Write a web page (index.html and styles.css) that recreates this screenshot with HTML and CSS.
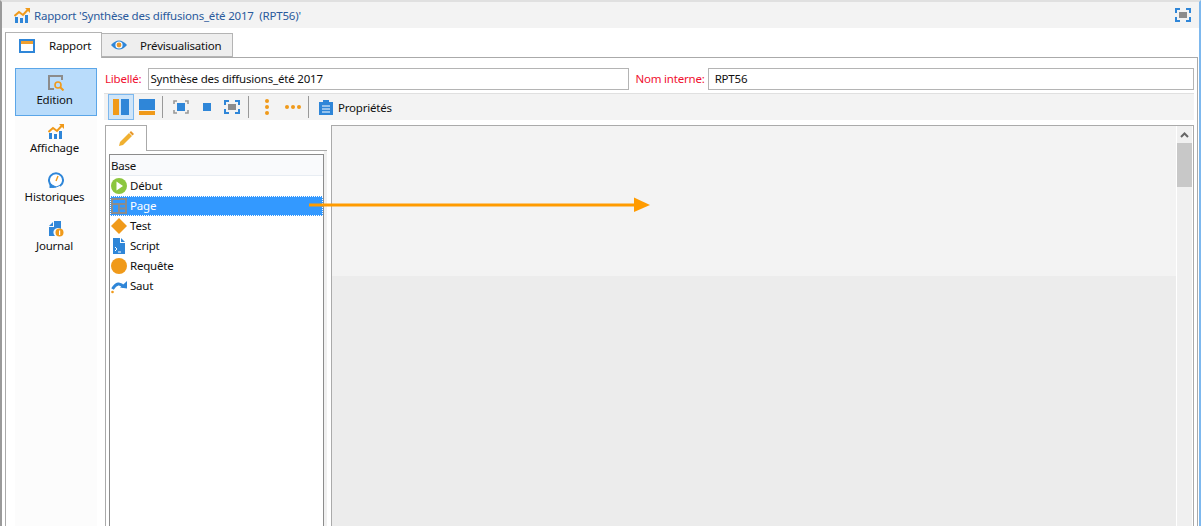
FILE: index.html
```html
<!DOCTYPE html>
<html lang="fr">
<head>
    <meta charset="UTF-8">
    <meta name="viewport" content="width=device-width, initial-scale=1.0">
    <title>Rapport</title>
    <link rel="stylesheet" href="styles.css">
</head>
<body>

<svg class="defs" width="0" height="0">
    <symbol id="chart" viewBox="0 0 16 16">
        <rect x="1" y="10" width="3" height="6" fill="#2f86d8"/>
        <rect x="6" y="11" width="3" height="5" fill="#2f86d8"/>
        <rect x="11" y="8" width="3" height="8" fill="#2f86d8"/>
        <path d="M0.5 9 L5 5 L9 8 L14 2.5" fill="none" stroke="#f09a1a" stroke-width="2"/>
        <path d="M11 1 H16 V6 Z" fill="#f09a1a"/>
    </symbol>
    <symbol id="fit" viewBox="0 0 16 16">
        <path d="M1 6 V2 H5 M11 2 H15 V6 M15 10 V14 H11 M5 14 H1 V10" fill="none" stroke="#2f86d8" stroke-width="2"/>
        <rect x="4" y="5" width="8" height="6" fill="#8c8c8c"/>
    </symbol>
</svg>

<div class="window">
    <header class="titlebar">
        <svg class="ico-16" width="16" height="16"><use href="#chart"/></svg>
        <span class="title-text">Rapport 'Synthèse des diffusions_été 2017&nbsp; (RPT56)'</span>
        <svg class="title-fit" width="16" height="16"><use href="#fit"/></svg>
    </header>

    <nav class="tabs">
        <a class="tab tab-active">
            <svg width="16" height="14" viewBox="0 0 16 14">
                <rect x="1" y="1" width="14" height="12" fill="#fff" stroke="#2f86d8" stroke-width="2"/>
                <rect x="2" y="2" width="12" height="3" fill="#f0a030"/>
            </svg>
            Rapport
        </a>
        <a class="tab">
            <svg width="16" height="12" viewBox="0 0 16 12">
                <path d="M0 6 Q8 -3 16 6 Q8 15 0 6 Z" fill="#2f86d8"/>
                <circle cx="8" cy="6" r="3.6" fill="#fff"/>
                <circle cx="8" cy="6" r="2.4" fill="#e8972a"/>
            </svg>
            Prévisualisation
        </a>
    </nav>

    <div class="panel">
        <aside class="sidebar">
            <div class="side-item side-selected">
                <svg width="16" height="16" viewBox="0 0 16 16">
                    <path d="M14 5 V1 H1 V14 H6" fill="none" stroke="#8c8c8c" stroke-width="2"/>
                    <circle cx="10" cy="10" r="3" fill="none" stroke="#f09a1a" stroke-width="1.6"/>
                    <path d="M12 12 L15.5 15.5" stroke="#f09a1a" stroke-width="2"/>
                </svg>
                <span>Edition</span>
            </div>
            <div class="side-item">
                <svg width="16" height="16"><use href="#chart"/></svg>
                <span>Affichage</span>
            </div>
            <div class="side-item">
                <svg width="16" height="16" viewBox="0 0 16 16">
                    <path d="M4 14 A7 7 0 1 1 12 14" fill="#fff" stroke="#2f86d8" stroke-width="2"/>
                    <path d="M2 12 L8 15 L2 16 Z M8 15 L13 13" fill="#2f86d8" stroke="#2f86d8"/>
                    <path d="M8 9 L10 4" stroke="#f09a1a" stroke-width="1.4"/>
                </svg>
                <span>Historiques</span>
            </div>
            <div class="side-item">
                <svg width="16" height="16" viewBox="0 0 16 16">
                    <path d="M1 5 L5 1 V5 Z M1 6 H6 V0 H13 V8 A4.5 4.5 0 0 0 7 15 H1 Z" fill="#2f86d8"/>
                    <circle cx="11.5" cy="11.5" r="4" fill="#f09a1a"/>
                    <rect x="11" y="9.5" width="1.2" height="4.5" fill="#fff"/>
                </svg>
                <span>Journal</span>
            </div>
        </aside>

        <main class="main">
            <div class="fields">
                <label class="field-label">Libellé:</label>
                <input class="field field-name" value="Synthèse des diffusions_été 2017">
                <label class="field-label">Nom interne:</label>
                <input class="field field-id" value="RPT56">
            </div>

            <div class="toolbar">
                <button class="tool tool-on">
                    <svg width="16" height="16" viewBox="0 0 16 16">
                        <rect x="0" y="0" width="6" height="16" fill="#f09a1a"/>
                        <rect x="8" y="0" width="8" height="16" fill="#2f86d8"/>
                    </svg>
                </button>
                <button class="tool">
                    <svg width="16" height="16" viewBox="0 0 16 16">
                        <rect x="0" y="0" width="16" height="11" fill="#2f86d8"/>
                        <rect x="0" y="12" width="16" height="4" fill="#f09a1a"/>
                    </svg>
                </button>
                <i class="tool-sep"></i>
                <button class="tool">
                    <svg width="16" height="16" viewBox="0 0 16 16">
                        <path d="M1 5 V2 H4 M12 2 H15 V5 M15 11 V14 H12 M4 14 H1 V11" fill="none" stroke="#999" stroke-width="1.6"/>
                        <rect x="4" y="4" width="8" height="8" fill="#2f86d8"/>
                    </svg>
                </button>
                <button class="tool">
                    <svg width="16" height="16" viewBox="0 0 16 16">
                        <rect x="4" y="4" width="8" height="8" fill="#2f86d8"/>
                    </svg>
                </button>
                <button class="tool tool-fit">
                    <svg width="16" height="16"><use href="#fit"/></svg>
                </button>
                <i class="tool-sep"></i>
                <button class="tool">
                    <svg width="16" height="16" viewBox="0 0 16 16" fill="#f09a1a">
                        <circle cx="8" cy="2" r="2"/><circle cx="8" cy="8" r="2"/><circle cx="8" cy="14" r="2"/>
                    </svg>
                </button>
                <button class="tool">
                    <svg width="16" height="16" viewBox="0 0 16 16" fill="#f09a1a">
                        <circle cx="2" cy="8" r="2"/><circle cx="8" cy="8" r="2"/><circle cx="14" cy="8" r="2"/>
                    </svg>
                </button>
                <i class="tool-sep"></i>
                <button class="tool tool-label">
                    <svg width="14" height="16" viewBox="0 0 14 16">
                        <path d="M0 3 H4 V1 H10 V3 H14 V16 H0 Z" fill="#2f86d8"/>
                        <path d="M3 7 H11 M3 10 H11 M3 13 H11" stroke="#fff"/>
                    </svg>
                    Propriétés
                </button>
            </div>

            <div class="workspace">
                <section class="palette">
                    <div class="palette-tab">
                        <svg width="16" height="16" viewBox="0 0 16 16">
                            <path d="M1 15 L2 11 L11 2 L14 5 L5 14 Z" fill="#f0b030"/>
                            <path d="M11.5 1.5 L13 0 L16 3 L14.5 4.5 Z" fill="#e8972a"/>
                        </svg>
                    </div>
                    <div class="palette-body">
                        <ul class="tree">
                            <li class="tree-head">Base</li>
                            <li class="tree-row">
                                <svg width="16" height="16" viewBox="0 0 16 16">
                                    <circle cx="8" cy="8" r="8" fill="#8cc63f"/>
                                    <path d="M5.5 3.5 L12 8 L5.5 12.5 Z" fill="#fff"/>
                                </svg>
                                Début
                            </li>
                            <li class="tree-row tree-selected">
                                <svg width="16" height="16" viewBox="0 0 16 16">
                                    <path d="M1 1 H15 V15 H1 Z M1 6 H15 M8 6 V15 M8 10.5 H15" fill="none" stroke="#8c8c8c" stroke-width="2"/>
                                </svg>
                                Page
                            </li>
                            <li class="tree-row">
                                <svg width="16" height="16" viewBox="0 0 16 16">
                                    <path d="M8 0 L16 8 L8 16 L0 8 Z" fill="#f09a1a"/>
                                </svg>
                                Test
                            </li>
                            <li class="tree-row">
                                <svg width="16" height="16" viewBox="0 0 16 16">
                                    <path d="M2 0 H9 V5 H14 V16 H2 Z M10 0 L14 4 H10 Z" fill="#2f86d8"/>
                                    <path d="M4 9 L6 11 L4 13 M7 14 H10" fill="none" stroke="#fff"/>
                                </svg>
                                Script
                            </li>
                            <li class="tree-row">
                                <svg width="16" height="16" viewBox="0 0 16 16">
                                    <circle cx="8" cy="8" r="8" fill="#f09a1a"/>
                                </svg>
                                Requête
                            </li>
                            <li class="tree-row">
                                <svg width="16" height="16" viewBox="0 0 16 16">
                                    <path d="M1.5 11 Q7 2 13 9" fill="none" stroke="#2f86d8" stroke-width="3"/>
                                    <path d="M9 9.5 L16 10.5 L16 3 Z" fill="#2f86d8"/>
                                    <circle cx="1.5" cy="14" r="1.3" fill="#f09a1a"/>
                                </svg>
                                Saut
                            </li>
                        </ul>
                    </div>
                </section>

                <section class="canvas">
                    <div class="canvas-area">
                        <div class="canvas-page"></div>
                    </div>
                    <div class="scrollbar">
                        <svg width="15" height="17" viewBox="0 0 15 17">
                            <path d="M4 11 L7.5 7.5 L11 11" fill="none" stroke="#666" stroke-width="2"/>
                        </svg>
                        <div class="scroll-thumb"></div>
                    </div>
                </section>
            </div>
        </main>

        <!-- fleche par-dessus la liste et le canvas -->
        <svg class="drag-arrow" width="342" height="16" viewBox="0 0 342 16">
            <rect x="0" y="6.5" width="326" height="3" fill="#ff9b00"/>
            <path d="M325 0.5 L341 8 L325 15 Z" fill="#ff9b00"/>
        </svg>
    </div>
</div>

</body>
</html>
```

FILE: styles.css
```css
html, body {
    margin: 0;
    height: 100%;
    overflow: hidden;
}
body {
    background: #fff;
    font-family: "Noto Sans", Arial, sans-serif;
    font-size: 11.5px;
    letter-spacing: -0.2px;
    color: #111;
}
.defs {
    position: absolute;
}
svg {
    display: block;
    flex: none;
}
.window {
    height: 526px;
    box-sizing: border-box;
    border-left: 2px solid #9a9a9a;
    border-right: 2px solid #7db8ee;
    border-top: 2px solid #e0e0e0;
    display: flex;
    flex-direction: column;
}

/* title bar */
.titlebar {
    height: 26px;
    flex: none;
    background: #f3f3f3;
    display: flex;
    align-items: center;
    padding: 0 8px 0 12px;
}
.title-text {
    margin-left: 4px;
    color: #2a5a9c;
    white-space: nowrap;
}
.title-fit {
    margin-left: auto;
}

/* tabs */
.tabs {
    height: 30px;
    flex: none;
    display: flex;
    align-items: flex-end;
    padding: 0 0 0 3px;
    box-sizing: border-box;
    position: relative;
    z-index: 1;
    margin-bottom: -1px;
}
.tab {
    height: 24px;
    box-sizing: border-box;
    width: 131px;
    margin-bottom: 1px;
    display: flex;
    align-items: center;
    gap: 13px;
    padding-left: 9px;
    background: #eeeeee;
    border: 1px solid #b4b4b4;
    border-left: 0;
}
.tab-active {
    height: 26px;
    width: 97px;
    margin-bottom: 0;
    gap: 14px;
    padding-left: 13px;
    background: #fff;
    border-left: 1px solid #aaa;
    border-bottom: 0;
}

/* main panel */
.panel {
    flex: 1;
    margin: 0 1px 0 3px;
    border: 1px solid #aaa;
    border-bottom: 0;
    display: flex;
    position: relative;
    min-height: 0;
}
.sidebar {
    width: 82px;
    flex: none;
    margin: 10px 0 0 9px;
    background: #fcfcfc;
}
.side-item {
    height: 48px;
    box-sizing: border-box;
    display: flex;
    flex-direction: column;
    align-items: center;
    padding-top: 6px;
    line-height: 17px;
}
.side-item span {
    margin-right: 3px;
}
.side-selected {
    background: #b9dcfb;
    border: 1px solid #5ba6e8;
    margin-bottom: 1px;
}
.side-item + .side-item {
    height: 49px;
}
.main {
    flex: 1;
    min-width: 0;
    margin: 10px 3px 0 7px;
    display: flex;
    flex-direction: column;
}

/* fields */
.fields {
    height: 22px;
    flex: none;
    display: flex;
    align-items: center;
}
.field-label {
    color: #f01030;
    margin: 0 0 2px 1px;
    white-space: nowrap;
}
.field {
    height: 22px;
    box-sizing: border-box;
    border: 1px solid #b4b4b4;
    padding: 0 1px 2px;
    margin: 0;
    font: inherit;
    letter-spacing: inherit;
    color: #111;
    outline: 0;
}
.field-name {
    width: 481px;
    margin: 0 5px 0 7px;
}
.field-id {
    flex: 1;
    min-width: 0;
    margin-left: 3px;
    padding-left: 6px;
}

/* toolbar */
.toolbar {
    height: 27px;
    flex: none;
    margin-top: 3px;
    box-sizing: border-box;
    background: #f3f3f3;
    border-top: 1px solid #e0e0e0;
    display: flex;
    align-items: center;
    padding-left: 4px;
}
.tool {
    height: 26px;
    width: 26px;
    box-sizing: border-box;
    padding: 0;
    border: 1px solid transparent;
    background: none;
    font: inherit;
    letter-spacing: inherit;
    color: #111;
    display: flex;
    align-items: center;
    justify-content: center;
}
.tool-on {
    background: #cfe5f9;
    border-color: #7db8ee;
}
.tool-fit {
    margin: 0 1px 0 -1px;
}
.tool-sep {
    width: 1px;
    height: 22px;
    background: #999;
    margin: 0 5px 0 2px;
}
.tool-label {
    width: auto;
    gap: 5px;
    padding-left: 6px;
    margin-left: -2px;
}

/* workspace */
.workspace {
    flex: 1;
    min-height: 0;
    margin-top: 5px;
    display: flex;
    gap: 4px;
}
.palette {
    width: 222px;
    margin-left: 1px;
    flex: none;
    display: flex;
    flex-direction: column;
}
.palette-tab {
    width: 42px;
    height: 26px;
    box-sizing: border-box;
    background: #fff;
    border: 1px solid #aaa;
    border-bottom: 0;
    margin-bottom: -1px;
    position: relative;
    display: flex;
    align-items: center;
    justify-content: center;
}
.palette-body {
    flex: 1;
    min-height: 0;
    border: 1px solid #aaa;
    border-width: 1px 0 0 1px;
    padding: 3px 3px 0 3px;
    background: linear-gradient(to left, #f0f0f0 3px, #fff 3px);
}
.tree {
    list-style: none;
    margin: 0;
    padding: 0;
    height: 100%;
    box-sizing: border-box;
    border: 1px solid #8c8c8c;
    border-bottom: 0;
    background: #fff;
}
.tree-head {
    height: 21px;
    line-height: 21px;
    padding-left: 1px;
    background: #f9fafc;
    border-bottom: 1px solid #e8edf3;
    box-sizing: border-box;
}
.tree-row {
    height: 20px;
    box-sizing: border-box;
    display: flex;
    align-items: center;
    gap: 3px;
    padding: 0 0 2px 1px;
}
.tree-row svg {
    margin-top: 2px;
}
.tree-selected {
    background: #3399ff;
    color: #fff;
    outline: 1px dotted #fff;
    outline-offset: -1px;
}

/* canvas */
.canvas {
    flex: 1;
    min-width: 0;
    border: 1px solid #aaa;
    border-bottom: 0;
    display: flex;
}
.canvas-area {
    flex: 1;
    min-width: 0;
    background: #ececec;
    border-right: 1px solid #fff;
}
.canvas-page {
    height: 150px;
    background: #f3f3f3;
}
.scrollbar {
    width: 15px;
    flex: none;
    background: #f0f0f0;
    margin-right: 1px;
}
.scroll-thumb {
    height: 44px;
    background: #c8c8c8;
}
.drag-arrow {
    position: absolute;
    left: 303px;
    top: 139px;
}
```
